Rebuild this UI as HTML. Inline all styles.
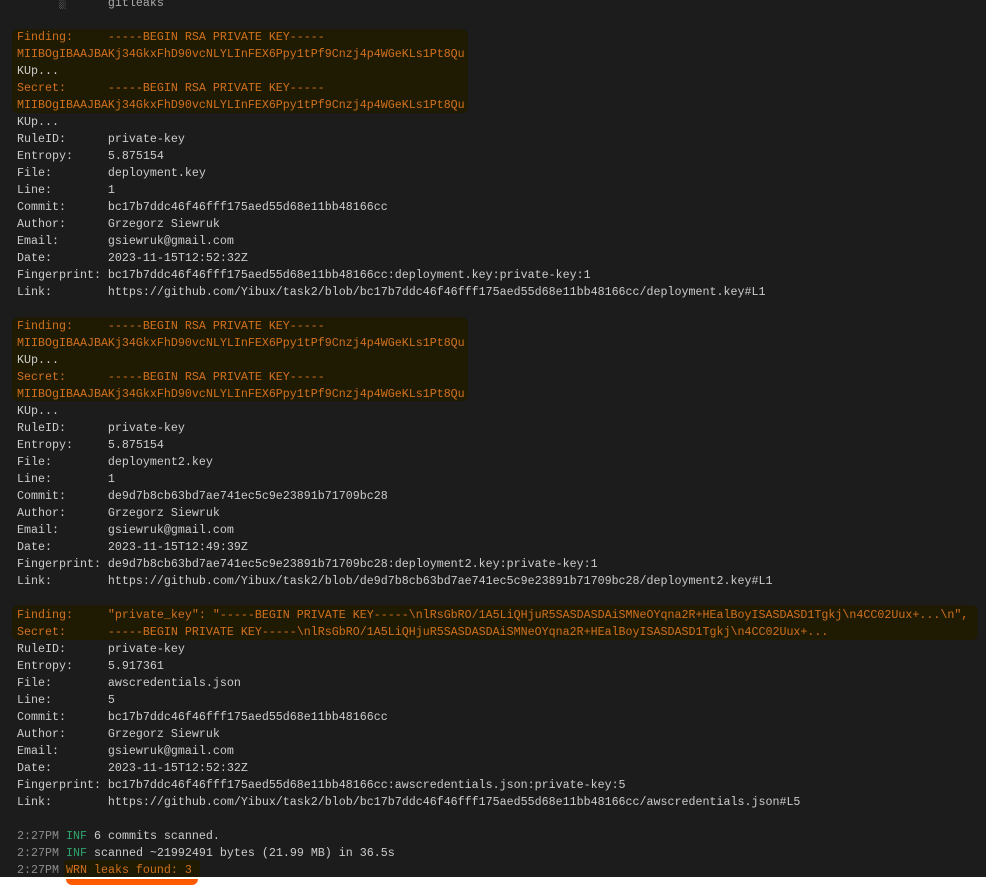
<!DOCTYPE html>
<html><head><style>
html,body{margin:0;padding:0;background:#fff;width:986px;height:888px;overflow:hidden}
#t{position:absolute;left:0;top:0;width:986px;height:877px;background:#1c1c1c}
.hl{position:absolute;background:#1f1b02;border-radius:6px}
pre{position:absolute;left:17px;top:-5px;margin:0;font-family:"Liberation Mono",monospace;font-size:11.67px;line-height:17px;color:#cccccc}
.o{color:#d1701d}.g{color:#2fa36b}.m{color:#8c8c8c}
</style></head><body>
<div id="t"></div>
<div class="hl" style="left:12px;top:29px;width:456px;height:84px"></div>
<div class="hl" style="left:12px;top:317px;width:456px;height:84px"></div>
<div class="hl" style="left:12px;top:605px;width:966px;height:35px"></div>
<div class="hl" style="left:64px;top:860px;width:136px;height:17px;border-radius:4px 4px 0 0"></div>
<div style="position:absolute;left:66px;top:879px;width:132px;height:6px;background:#ff5a00;border-radius:0 0 30px 30px"></div>
<pre><span style="color:#aaa">      ░      gitleaks</span>

<span class="o">Finding:     -----BEGIN RSA PRIVATE KEY-----
MIIBOgIBAAJBAKj34GkxFhD90vcNLYLInFEX6Ppy1tPf9Cnzj4p4WGeKLs1Pt8Qu</span>
KUp...
<span class="o">Secret:      -----BEGIN RSA PRIVATE KEY-----
MIIBOgIBAAJBAKj34GkxFhD90vcNLYLInFEX6Ppy1tPf9Cnzj4p4WGeKLs1Pt8Qu</span>
KUp...
RuleID:      private-key
Entropy:     5.875154
File:        deployment.key
Line:        1
Commit:      bc17b7ddc46f46fff175aed55d68e11bb48166cc
Author:      Grzegorz Siewruk
Email:       gsiewruk@gmail.com
Date:        2023-11-15T12:52:32Z
Fingerprint: bc17b7ddc46f46fff175aed55d68e11bb48166cc:deployment.key:private-key:1
Link:        https://github.com/Yibux/task2/blob/bc17b7ddc46f46fff175aed55d68e11bb48166cc/deployment.key#L1

<span class="o">Finding:     -----BEGIN RSA PRIVATE KEY-----
MIIBOgIBAAJBAKj34GkxFhD90vcNLYLInFEX6Ppy1tPf9Cnzj4p4WGeKLs1Pt8Qu</span>
KUp...
<span class="o">Secret:      -----BEGIN RSA PRIVATE KEY-----
MIIBOgIBAAJBAKj34GkxFhD90vcNLYLInFEX6Ppy1tPf9Cnzj4p4WGeKLs1Pt8Qu</span>
KUp...
RuleID:      private-key
Entropy:     5.875154
File:        deployment2.key
Line:        1
Commit:      de9d7b8cb63bd7ae741ec5c9e23891b71709bc28
Author:      Grzegorz Siewruk
Email:       gsiewruk@gmail.com
Date:        2023-11-15T12:49:39Z
Fingerprint: de9d7b8cb63bd7ae741ec5c9e23891b71709bc28:deployment2.key:private-key:1
Link:        https://github.com/Yibux/task2/blob/de9d7b8cb63bd7ae741ec5c9e23891b71709bc28/deployment2.key#L1

<span class="o">Finding:     "private_key": "-----BEGIN PRIVATE KEY-----\nlRsGbRO/1A5LiQHjuR5SASDASDAiSMNeOYqna2R+HEalBoyISASDASD1Tgkj\n4CC02Uux+...\n",
Secret:      -----BEGIN PRIVATE KEY-----\nlRsGbRO/1A5LiQHjuR5SASDASDAiSMNeOYqna2R+HEalBoyISASDASD1Tgkj\n4CC02Uux+...</span>
RuleID:      private-key
Entropy:     5.917361
File:        awscredentials.json
Line:        5
Commit:      bc17b7ddc46f46fff175aed55d68e11bb48166cc
Author:      Grzegorz Siewruk
Email:       gsiewruk@gmail.com
Date:        2023-11-15T12:52:32Z
Fingerprint: bc17b7ddc46f46fff175aed55d68e11bb48166cc:awscredentials.json:private-key:5
Link:        https://github.com/Yibux/task2/blob/bc17b7ddc46f46fff175aed55d68e11bb48166cc/awscredentials.json#L5

<span class="m">2:27PM</span> <span class="g">INF</span> 6 commits scanned.
<span class="m">2:27PM</span> <span class="g">INF</span> scanned ~21992491 bytes (21.99 MB) in 36.5s
<span class="m">2:27PM</span> <span class="o">WRN leaks found: 3</span></pre>
</body></html>
